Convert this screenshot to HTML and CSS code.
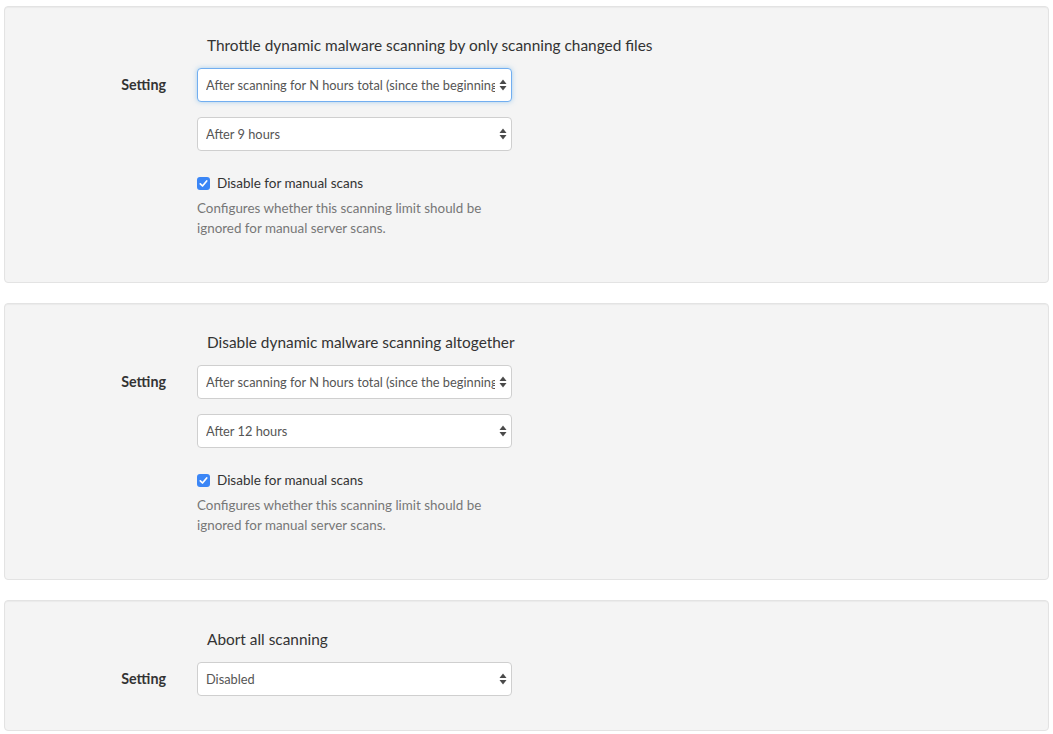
FILE: index.html
```html
<!DOCTYPE html>
<html>
<head>
<meta charset="utf-8">
<link rel="stylesheet" href="styles.css">
</head>
<body>
<div class="page">
  <section class="well">
    <div class="title-row"><span class="spacer"></span><h4 class="title">Throttle dynamic malware scanning by only scanning changed files</h4></div>
    <div class="row">
      <label class="label">Setting</label>
      <div class="controls">
        <div class="select focused"><span class="select-text">After scanning for N hours total (since the beginning of the scan)</span><svg class="arrows" width="8" height="12" viewBox="0 0 8 12"><path d="M4 0.5 L7.5 5 L0.5 5 Z" /><path d="M4 11.5 L7.5 7 L0.5 7 Z" /></svg></div>
        <div class="select second"><span class="select-text">After 9 hours</span><svg class="arrows" width="8" height="12" viewBox="0 0 8 12"><path d="M4 0.5 L7.5 5 L0.5 5 Z" /><path d="M4 11.5 L7.5 7 L0.5 7 Z" /></svg></div>
        <div class="check"><svg class="box" width="13" height="13" viewBox="0 0 13 13"><rect x="0" y="0" width="13" height="13" rx="3" fill="#3b86f6"/><path d="M3.3 6.8 L5.5 9 L9.7 4" fill="none" stroke="#fff" stroke-width="1.7" stroke-linecap="round" stroke-linejoin="round"/></svg><span>Disable for manual scans</span></div>
        <p class="help">Configures whether this scanning limit should be ignored for manual server scans.</p>
      </div>
    </div>
  </section>

  <section class="well">
    <div class="title-row"><span class="spacer"></span><h4 class="title">Disable dynamic malware scanning altogether</h4></div>
    <div class="row">
      <label class="label">Setting</label>
      <div class="controls">
        <div class="select"><span class="select-text">After scanning for N hours total (since the beginning of the scan)</span><svg class="arrows" width="8" height="12" viewBox="0 0 8 12"><path d="M4 0.5 L7.5 5 L0.5 5 Z" /><path d="M4 11.5 L7.5 7 L0.5 7 Z" /></svg></div>
        <div class="select second"><span class="select-text">After 12 hours</span><svg class="arrows" width="8" height="12" viewBox="0 0 8 12"><path d="M4 0.5 L7.5 5 L0.5 5 Z" /><path d="M4 11.5 L7.5 7 L0.5 7 Z" /></svg></div>
        <div class="check"><svg class="box" width="13" height="13" viewBox="0 0 13 13"><rect x="0" y="0" width="13" height="13" rx="3" fill="#3b86f6"/><path d="M3.3 6.8 L5.5 9 L9.7 4" fill="none" stroke="#fff" stroke-width="1.7" stroke-linecap="round" stroke-linejoin="round"/></svg><span>Disable for manual scans</span></div>
        <p class="help">Configures whether this scanning limit should be ignored for manual server scans.</p>
      </div>
    </div>
  </section>

  <section class="well last">
    <div class="title-row"><span class="spacer"></span><h4 class="title">Abort all scanning</h4></div>
    <div class="row">
      <label class="label">Setting</label>
      <div class="controls">
        <div class="select"><span class="select-text">Disabled</span><svg class="arrows" width="8" height="12" viewBox="0 0 8 12"><path d="M4 0.5 L7.5 5 L0.5 5 Z" /><path d="M4 11.5 L7.5 7 L0.5 7 Z" /></svg></div>
      </div>
    </div>
  </section>
</div>
</body>
</html>
```

FILE: styles.css
```css
* { box-sizing: border-box; }
html, body { margin: 0; padding: 0; background: #fff; }
body {
  font-family: Lato, "Liberation Sans", sans-serif;
  color: #333;
  font-size: 14px;
  line-height: 20px;
}
.page {
  padding: 6px 4px 0 4px;
}
.well {
  background: #f4f4f4;
  border: 1px solid #e3e3e3;
  border-radius: 4px;
  box-shadow: inset 0 1px 1px rgba(0,0,0,0.04);
  padding: 19px 19px 34px 19px;
  margin-bottom: 20px;
}
.title-row {
  display: grid;
  grid-template-columns: 173px 1fr;
}
.title {
  margin: 8px 0 12px 10px;
  font-size: 15.4px;
  font-weight: 400;
  line-height: 22px;
  color: #333;
}
.row {
  display: grid;
  grid-template-columns: 173px 315px;
  align-items: start;
}
.label {
  font-weight: 700;
  font-size: 14.3px;
  text-align: right;
  padding-right: 31px;
  line-height: 34px;
  color: #333;
}
.controls {
  display: flex;
  flex-direction: column;
}
.select {
  height: 34px;
  background: #fff;
  border: 1px solid #cfcfcf;
  border-radius: 4px;
  display: flex;
  align-items: center;
  padding: 0 4px 0 8px;
  color: #555;
  font-size: 12.8px;
  gap: 4px;
}
.select.focused {
  border-color: #72aef0;
  box-shadow: 0 0 5px rgba(102,175,233,0.55);
}
.select.second { margin-top: 15px; }
.select-text {
  flex: 1;
  min-width: 0;
  white-space: nowrap;
  overflow: hidden;
}
.arrows { fill: #4a4a4a; flex: none; }
.check {
  margin-top: 22px;
  display: flex;
  align-items: center;
  gap: 7px;
  font-size: 13.5px;
  color: #333;
  height: 20px;
}
.box { flex: none; }
.help {
  margin: 5px 0 10px 0;
  font-size: 13.4px;
  color: #777;
  line-height: 20px;
}
```
